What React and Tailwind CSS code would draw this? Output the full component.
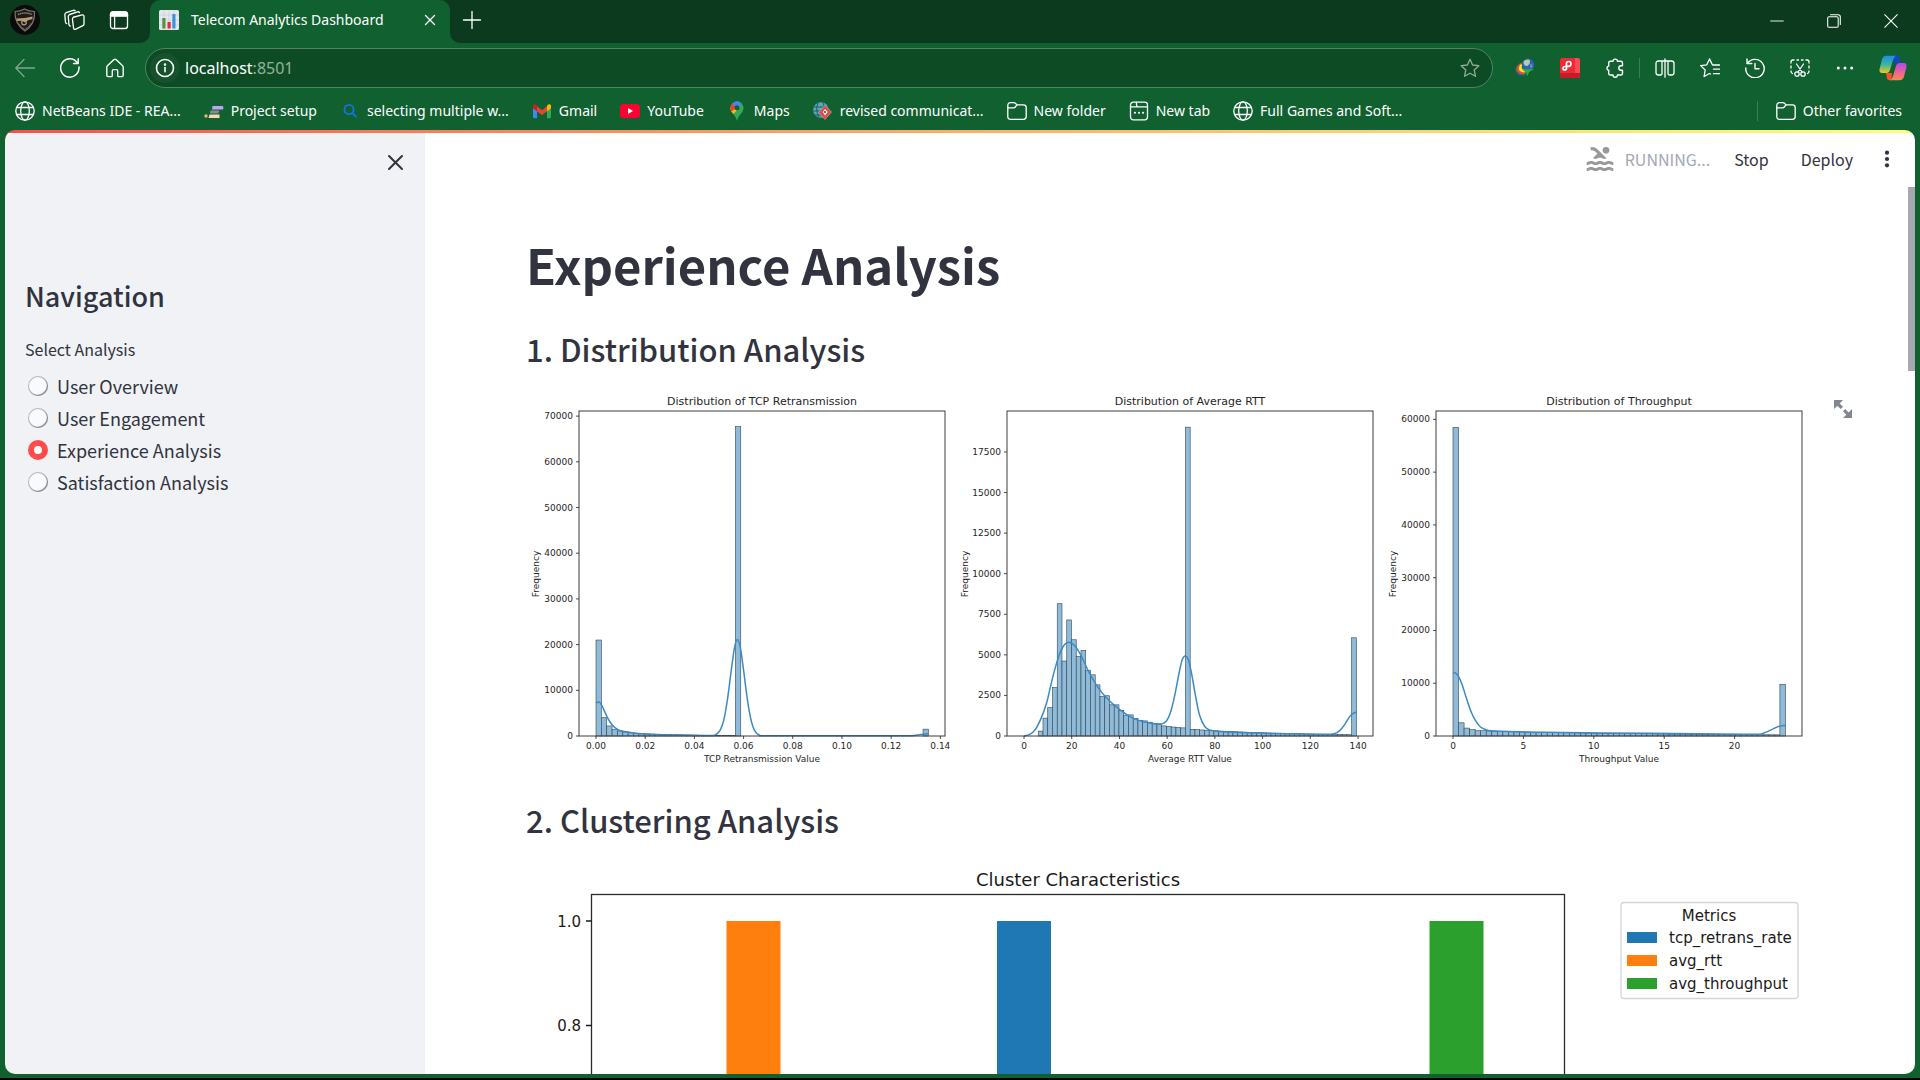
import React, { useState } from "react";
import { MdPool } from "react-icons/md";

const stroke = {
  fill: "none",
  stroke: "currentColor",
  strokeWidth: 1.3,
  strokeLinecap: "round",
  strokeLinejoin: "round",
};

function Icon({ size = "size-5", children, ...rest }) {
  return (
    <svg viewBox="0 0 20 20" className={`${size} shrink-0`} aria-hidden="true" {...stroke} {...rest}>
      {children}
    </svg>
  );
}

/* ---------- icons ---------- */

const Crest = () => (
  <svg viewBox="0 0 30 30" className="size-[30px]" aria-hidden="true">
    <circle cx="15" cy="15" r="15" fill="#0b0b0c" />
    <path d="M5 6.5Q10 6.5 14.500 4Q19 6.500 24.500 6.500Q25.500 19 15 26Q4.500 19 5 6.500Z" fill="#1d1b19" stroke="#7d7467" strokeWidth="1.200" />
    <path d="M8 9.500Q15 6.500 22 9.500" fill="none" stroke="#8b8478" strokeWidth="1.500" strokeDasharray="1.500 .6" />
    <path d="M6.500 13.500L15 13L22.500 11.500L22.500 14L17.500 15.500L15 17.500L12 15.700L7 16Z" fill="#b79c78" />
    <circle cx="14" cy="17.500" r="2.300" fill="none" stroke="#b79c78" strokeWidth="1.200" />
    <path d="M9 19Q11 22.500 15 24.500Q19 22 21.500 18" fill="none" stroke="#6d6357" strokeWidth="1" />
  </svg>
);

const Workspaces = () => (
  <Icon size="size-[22px]" strokeWidth="1.200">
    <path d="M8.800 7.300L16.800 5.200Q18.500 5 18.500 6.600V13.500Q18.500 14.600 17.500 14.900L10.600 18.300Q9.200 18.700 9 17.300L8 9.300Q8 7.700 8.800 7.300Z" transform="translate(.6 .2)" />
    <path d="M6.600 15.600Q5.500 15.300 5.400 14.200L4.800 6.900Q4.800 5.500 6 5L13.300 2.600Q14.600 2.300 15 3.400" />
    <path d="M3.300 13.200Q2.300 12.800 2.200 11.700L1.700 5.200Q1.600 3.900 2.800 3.400L9.300 1.200Q10.400 .9 11 1.600" />
  </Icon>
);

const TabActions = () => (
  <Icon>
    <rect x="1.500" y="1.800" width="17" height="16.700" rx="2.600" />
    <path d="M1.500 4.400Q1.500 1.800 4.100 1.800H15.900Q18.500 1.800 18.500 4.400V6.200H1.500Z" fill="currentColor" />
    <path d="M5.600 6.500V18.200" />
  </Icon>
);

const ChartFavicon = () => (
  <svg viewBox="0 0 20 20" className="size-5 shrink-0" aria-hidden="true">
    <rect width="20" height="20" rx="1.500" fill="#e3e8ee" />
    <path d="M0 5H20M0 10H20M0 15H20M5 0V20M10 0V20M15 0V20" stroke="#c4ced8" strokeWidth=".7" />
    <rect x="3.300" y="8" width="3.200" height="10.500" fill="#5c913b" />
    <rect x="8.500" y="12" width="3.200" height="6.500" fill="#dd2e44" />
    <rect x="13.300" y="4" width="3.200" height="14.500" fill="#3b94d9" />
  </svg>
);

const Close = ({ size = "size-5" }) => (
  <Icon size={size}><path d="M5.500 5.500L14.500 14.500M14.500 5.500L5.500 14.500" /></Icon>
);
const Plus = () => <Icon><path d="M10 1.500V18.500M1.500 10H18.500" /></Icon>;
const Back = () => <Icon><path d="M19.500 10H1M9 1.500L.8 10L9 18.500" /></Icon>;
const Reload = () => (
  <Icon strokeWidth="1.500"><path d="M19 9A9.200 9.200 0 1 1 14.800 2.200L18 5.300M18.200 .8V5.500H13.500" /></Icon>
);
const Home = () => (
  <Icon strokeWidth="1.400"><path d="M1.800 9.200Q1.800 8.300 2.400 7.800L9 1.600Q10 .9 11 1.600L17.600 7.800Q18.200 8.300 18.200 9.200V17.300Q18.200 18.600 17 18.600H13.900Q12.700 18.600 12.700 17.400V13Q12.700 11.600 11.500 11.600H8.500Q7.300 11.600 7.300 13V17.400Q7.300 18.600 6.100 18.600H3Q1.800 18.600 1.800 17.300Z" /></Icon>
);
const Info = () => (
  <Icon strokeWidth="1.600"><circle cx="10" cy="10" r="8.500" /><path d="M10 9.500V13.800" /><circle cx="10" cy="6.600" r=".5" fill="currentColor" /></Icon>
);
const starPath = "M10 1.300L12.600 7L18.800 7.700L14.200 11.900L15.500 18.300L10 15.200L4.500 18.300L5.800 11.900L1.200 7.700L7.400 7Z";
const Star = () => <Icon><path d={starPath} /></Icon>;
const Globe = () => (
  <Icon><circle cx="10" cy="10" r="9.200" /><ellipse cx="10" cy="10" rx="4.300" ry="9.200" /><path d="M1.800 6.500H18.200M1.800 13.500H18.200" /></Icon>
);
const Folder = () => (
  <Icon>
    <path d="M.8 4.600Q.8 1.600 3.600 1.600H6.700Q7.700 1.600 8.400 2.300L10 3.900H16.500Q19.200 3.900 19.200 6.600V15.600Q19.200 18.300 16.500 18.300H3.500Q.8 18.300 .8 15.600Z" />
    <path d="M.8 6.800H6.700Q7.700 6.800 8.300 6L10 3.900" />
  </Icon>
);
const NewTabIcon = () => (
  <Icon>
    <rect x="1.500" y="1.200" width="17" height="17.600" rx="2.800" />
    <path d="M1.500 5.800H18.500M7.500 1.200V3.500Q7.500 5.800 9.500 5.800" />
    <path d="M5.800 11.800H6M9.900 11.800H10.100M14 11.800H14.200" strokeWidth="2" />
  </Icon>
);
const Search = () => (
  <Icon stroke="#1a73d2" strokeWidth="1.800"><circle cx="9" cy="8.500" r="4.600" /><path d="M12.400 12L16 15.700" /></Icon>
);
const Setup = () => (
  <svg viewBox="0 0 20 20" className="size-5 shrink-0" aria-hidden="true">
    <path d="M8.500 5H18.500Q20 5.500 19 8.500H8Z" fill="#b9a7f2" />
    <path d="M6.500 9.500H15.500L14 12.500H6Z" fill="#8a8a95" />
    <path d="M5.500 13.500H15.500V17H4.500Z" fill="#f8d9b0" />
    <circle cx="2" cy="15" r="1.700" fill="#f0b27a" />
  </svg>
);
const Gmail = () => (
  <svg viewBox="0 0 20 20" className="size-5 shrink-0" aria-hidden="true">
    <path d="M1 4.500V16Q1 17.300 2.300 17.300H5V9Z" fill="#4285f4" />
    <path d="M19 4.500V16Q19 17.300 17.700 17.300H15V9Z" fill="#34a853" />
    <path d="M5 5.300L10 9.300L15 5.300V10.200L10 14L5 10.200Z" fill="#ea4335" />
    <path d="M1 5Q1.200 2.300 3.900 3.600L5 4.800V10.200L1 7.200Z" fill="#c5221f" />
    <path d="M19 5Q18.800 2.300 16.100 3.600L15 4.800V10.200L19 7.200Z" fill="#fbbc04" />
  </svg>
);
const YouTube = () => (
  <svg viewBox="0 0 20 20" className="size-5 shrink-0" aria-hidden="true">
    <rect y="3" width="20" height="14" rx="3.500" fill="#ff0033" />
    <path d="M8 7L13 10L8 13Z" fill="#fff" />
  </svg>
);
const Maps = () => (
  <svg viewBox="0 0 20 20" className="size-5 shrink-0" aria-hidden="true">
    <path d="M3.500 7A6.500 6.500 0 0 1 16.500 7C16.500 12.500 11.500 13 10 20C8.500 13 3.500 12.500 3.500 7Z" fill="#34a853" />
    <path d="M3.500 7C3.500 10 5 11.500 6.500 13L13 5.500L7 3Z" fill="#fbbc04" />
    <path d="M3.500 7Q3.500 4.500 5.200 2.600L10 6.500L4.500 10.500Q3.500 9 3.500 7Z" fill="#ea4335" />
    <path d="M5.200 2.600Q10-2.500 14.900 2.700L10 7.500Z" fill="#4285f4" />
    <circle cx="10" cy="6.800" r="2.500" fill="#1c5a35" />
  </svg>
);
const Revised = () => (
  <svg viewBox="0 0 20 20" className="size-5 shrink-0" aria-hidden="true">
    <circle cx="8" cy="9" r="7.800" fill="#5ba7b8" />
    <path d="M1 6H15M.5 10H15M2 14H13M5 2Q2 9 6 16M10 1.500Q13 8 9 16" stroke="#1b5e66" strokeWidth="1" fill="none" />
    <path d="M12 4.500L18.500 11L12 18.500L5.500 11.500Z" fill="#dd4b4b" stroke="#e9a09a" strokeWidth=".6" />
    <path d="M12 8L14.700 11L12 14.500L9.800 11.300Z" fill="#fff" />
    <circle cx="12" cy="11" r="1.100" fill="#c62828" />
  </svg>
);
const DownloadManager = () => (
  <svg viewBox="0 0 20 20" className="size-5" aria-hidden="true">
    <path d="M5 5Q-1 9 1 14Q4 19.500 11 17L10 12Q6 13 5.500 10Q5.300 7.500 8 5.500Z" fill="#2a5f98" />
    <path d="M5 5.500Q0 9.500 2 13.500Q5 17 10 16L8.500 13Q4 13 4.500 9.500Q5 7 7.500 5Z" fill="#e3502c" />
    <path d="M6 6Q2.500 9.500 4.500 12.500Q6.500 14.800 10.500 14.500L9 11.500Q5.500 11 7.500 6.500Z" fill="#f2e63c" />
    <circle cx="13" cy="6.800" r="6.200" fill="#2f63b0" />
    <path d="M8.500 3.500Q11 .5 14.500 1.800Q16 5.500 12.500 8Q8.500 8.500 8.500 3.500Z" fill="#b9c9b0" />
    <path d="M15 6Q18 6 17.500 9Q16 11 15 9Z" fill="#5d8fd0" />
    <path d="M7 11.500L19 11L12 18.500L11.500 15Z" fill="#25b33b" />
    <path d="M12 18.500L19 11L14.500 14Z" fill="#0b3f17" />
  </svg>
);
const RedExtension = () => (
  <svg viewBox="0 0 20 20" className="size-5" aria-hidden="true">
    <rect width="20" height="20" rx="2.500" fill="#ee2a35" />
    <path d="M15 0H17.500Q20 0 20 2.500V17.500Q20 20 17.500 20H15Z" fill="#fb4a57" />
    <path d="M0 15H20V17.500Q20 20 17.500 20H2.500Q0 20 0 17.500Z" fill="#c81a2a" />
    <path d="M5 8.500Q3 8.500 3 10.300Q3 12 4.700 12Q6.500 12 6.500 10V5.500Q6.500 3.500 8.700 3.500Q11 3.500 11 5.800Q11 8.300 8.500 8.300H5" fill="none" stroke="#fff" strokeWidth="1.700" />
  </svg>
);
const Puzzle = () => (
  <Icon strokeWidth="1.400"><path d="M8 3.300A2.200 2.200 0 0 1 12.400 3.300H15.800Q17.500 3.300 17.500 5V7.800H16A2.200 2.200 0 0 0 16 12.200H17.500V15.400Q17.500 17 15.800 17H12.400A2.200 2.200 0 0 1 8 17H5.400Q3.700 17 3.700 15.400V12.300A2.200 2.200 0 0 1 3.700 8V5Q3.700 3.300 5.400 3.300Z" /></Icon>
);
const Split = () => (
  <Icon><path d="M10 3H3.500Q1 3 1 5.500V14.500Q1 17 3.500 17H5.500Q7 17 7 15.500V3M10 3H16.500Q19 3 19 5.500V14.500Q19 17 16.500 17H14.500Q13 17 13 15.500V3M10 .8V19.200" /></Icon>
);
const Favorites = () => (
  <Icon><path d="M19.500 11.200H13.500M19.500 15.700H13.500M19.500 7H12.500L9.500 .9L6.800 6.800L.6 7.600L5.200 12L4.100 18.500L9.500 15.500L10.500 16" /></Icon>
);
const History = () => (
  <Icon strokeWidth="1.400"><path d="M2.300 5.500A9.200 9.200 0 1 1 .8 10M2 .9V5.500H6.800M10 5.500V10.800H14" /></Icon>
);
const Capture = () => (
  <Icon>
    <path d="M1 5V4Q1 2 3 2H4M7 2H8.500M11.500 2H13M16 2H17Q19 2 19 4V5M19 8V10M19 13Q19 15 17.500 15.500M1 8V10M1 13Q1 15 2.500 15.500" />
    <path d="M6.500 6L12 14M13.500 6L8 14" />
    <circle cx="7" cy="16" r="2.200" /><circle cx="13" cy="16" r="2.200" />
  </Icon>
);
const More = () => (
  <Icon fill="currentColor" stroke="none"><circle cx="3.300" cy="10" r="1.500" /><circle cx="10" cy="10" r="1.500" /><circle cx="16.700" cy="10" r="1.500" /></Icon>
);
const Copilot = () => (
  <svg viewBox="0 0 28 26" className="h-[26px] w-7" aria-hidden="true">
    <defs>
      <linearGradient id="cpA" x1="0" y1="0" x2="0" y2="1"><stop offset="0" stopColor="#1b8fe8" /><stop offset=".5" stopColor="#37b5a0" /><stop offset="1" stopColor="#f5c518" /></linearGradient>
      <linearGradient id="cpB" x1="0" y1="0" x2="0" y2="1"><stop offset="0" stopColor="#a64df0" /><stop offset=".5" stopColor="#ee5e9a" /><stop offset="1" stopColor="#fb8b4b" /></linearGradient>
    </defs>
    <path d="M14 .8H17.500Q19.500 .8 20.200 3L21.500 8H15Z" fill="#1246c9" />
    <path d="M7 18H13L12.500 25.200H10.500Q8.500 25.200 8 23.500Z" fill="#f0562e" />
    <path d="M7.500 .8H17Q15 1.500 14 5L11 15Q10 18 7.500 18H3Q0 18 .5 14L3 4.500Q4 .8 7.500 .8Z" fill="url(#cpA)" />
    <path d="M20.500 25.200H11Q13 24.500 14 21L17 11Q18 8 20.500 8H25Q28 8 27.500 12L25 21.500Q24 25.200 20.500 25.200Z" fill="url(#cpB)" />
  </svg>
);

/* ---------- browser chrome ---------- */

const bookmarks = [
  ["NetBeans IDE - REA...", Globe],
  ["Project setup", Setup],
  ["selecting multiple w...", Search],
  ["Gmail", Gmail],
  ["YouTube", YouTube],
  ["Maps", Maps],
  ["revised communicat...", Revised],
  ["New folder", Folder],
  ["New tab", NewTabIcon],
  ["Full Games and Soft...", Globe],
];

function ToolButton({ label, children, className = "w-[45px]" }) {
  return (
    <button type="button" aria-label={label} className={`flex h-10 shrink-0 items-center justify-center ${className}`}>
      {children}
    </button>
  );
}

function TitleBar() {
  return (
    <div className="flex h-[43px] bg-[#0c3a1e]">
      <div className="flex w-[150px] shrink-0 items-center bg-[#0c3a1e] pb-1 pl-0.5">
        <ToolButton label="Profile"><Crest /></ToolButton>
        <ToolButton label="Workspaces" className="w-[50px] pl-1"><Workspaces /></ToolButton>
        <ToolButton label="Tab actions" className="w-[45px] pr-px"><TabActions /></ToolButton>
      </div>
      <div className="-ml-2.5 flex w-[320px] shrink-0 bg-[#106030]">
        <div className="w-2.5 rounded-br-[10px] bg-[#0c3a1e]" />
        <div className="flex flex-1 bg-[#0c3a1e]">
          <div className="flex flex-1 items-center rounded-t-[10px] bg-[#106030] pb-1 pl-[9px] pr-2">
            <ChartFavicon />
            <span className="ml-3 flex-1 whitespace-nowrap text-[14px]">Telecom Analytics Dashboard</span>
            <button type="button" aria-label="Close tab" className="flex size-6 items-center justify-center"><Close /></button>
          </div>
        </div>
        <div className="w-2.5 rounded-bl-[10px] bg-[#0c3a1e]" />
      </div>
      <button type="button" aria-label="New tab" className="flex w-6 items-center justify-center pb-1"><Plus /></button>
      <div className="ml-auto flex pb-0.5 pr-px">
        <button type="button" aria-label="Minimize" className="flex w-[57px] items-center justify-center">
          <Icon size="size-3.5"><path d="M1 10H19" /></Icon>
        </button>
        <button type="button" aria-label="Restore" className="flex w-[57px] items-center justify-center">
          <Icon size="size-3.5" strokeWidth="1.500"><rect x="1" y="4" width="15" height="15" rx="2" /><path d="M5 1H16Q19 1 19 4V15" /></Icon>
        </button>
        <button type="button" aria-label="Close window" className="flex w-[57px] items-center justify-center">
          <Icon size="size-3.5" strokeWidth="1.500"><path d="M1 1L19 19M19 1L1 19" /></Icon>
        </button>
      </div>
    </div>
  );
}

function Toolbar() {
  return (
    <div className="flex h-[50px] items-center pl-0.5 pr-px">
      <ToolButton label="Back" className="w-[45px] opacity-45"><Back /></ToolButton>
      <ToolButton label="Reload"><Reload /></ToolButton>
      <ToolButton label="Home"><Home /></ToolButton>
      <div className="ml-2 mr-[9px] flex h-10 flex-1 items-center rounded-full border border-[#4f8563] bg-[#0d4b25] pl-1 pr-3">
        <button type="button" aria-label="Site information" className="flex size-[30px] items-center justify-center rounded-full bg-[#15522d]"><Info /></button>
        <div className="relative ml-[5px] h-8 flex-1">
          <div aria-hidden="true" className="absolute inset-0 flex items-center text-[16px]">
            <span>localhost</span><span className="text-[#93b29d]">:8501</span>
          </div>
          <input aria-label="Address" defaultValue="" className="relative h-8 w-full bg-transparent outline-none" />
        </div>
        <button type="button" aria-label="Add to favorites" className="text-[#8fae9a]"><Star /></button>
      </div>
      <ToolButton label="Download manager"><DownloadManager /></ToolButton>
      <ToolButton label="PDF extension"><RedExtension /></ToolButton>
      <ToolButton label="Extensions"><Puzzle /></ToolButton>
      <div className="mx-0.5 h-5 w-px bg-[#3c7f55]" />
      <ToolButton label="Split screen"><Split /></ToolButton>
      <ToolButton label="Favorites"><Favorites /></ToolButton>
      <ToolButton label="History"><History /></ToolButton>
      <ToolButton label="Screenshot"><Capture /></ToolButton>
      <ToolButton label="Settings and more"><More /></ToolButton>
      <ToolButton label="Copilot" className="w-[52px]"><Copilot /></ToolButton>
    </div>
  );
}

function Bookmarks() {
  return (
    <nav aria-label="Favorites bar" className="flex h-9 items-center pb-px pl-[15px] pr-[18px] text-[14px]">
      <div className="flex items-center gap-[23px]">
        {bookmarks.map(([name, Glyph]) => (
          <a key={name} href="#" className="flex items-center gap-[7px] whitespace-nowrap"><Glyph />{name}</a>
        ))}
      </div>
      <div className="ml-auto h-5 w-px bg-[#3c7f55]" />
      <a href="#" className="ml-[18px] flex items-center gap-[7px] whitespace-nowrap"><Folder />Other favorites</a>
    </nav>
  );
}

/* ---------- charts ---------- */

const BASE = 346;
const TOP = 21;

/* Catmull-Rom spline through the points, written as cubic segments */
function smooth(points) {
  let d = `M${points[0][0]} ${points[0][1]}`;
  for (let i = 0; i < points.length - 1; i++) {
    const p0 = points[i - 1] || points[i];
    const p1 = points[i];
    const p2 = points[i + 1];
    const p3 = points[i + 2] || p2;
    d += `C${p1[0] + (p2[0] - p0[0]) / 6} ${p1[1] + (p2[1] - p0[1]) / 6} ${p2[0] - (p3[0] - p1[0]) / 6} ${p2[1] - (p3[1] - p1[1]) / 6} ${p2[0]} ${p2[1]}`;
  }
  return d;
}

const decay = (n, from, to) =>
  Array.from({ length: n }, (_, i) => from * Math.pow(to / from, i / (n - 1)));

/* bars are frequencies; density is [x in data units, frequency] */
const histograms = [
  {
    title: "Distribution of TCP Retransmission",
    label: "TCP Retransmission Value",
    left: 53, labelX: 13, zero: 70, unit: 2459.5, perCount: 0.00457,
    yTicks: [0, 10000, 20000, 30000, 40000, 50000, 60000, 70000],
    xTicks: ["0.00", "0.02", "0.04", "0.06", "0.08", "0.10", "0.12", "0.14"],
    bin: 0.00218,
    bars: [21000, 4000, 2200, 1400, 1100, 900, 700, ...decay(19, 560, 90), 67700, ...Array(34).fill(0), 1500],
    density: [[0, 7200], [0.0009, 7450], [0.0018, 7200], [0.003, 6000], [0.0045, 4200], [0.006, 2850], [0.0077, 1850], [0.01, 1150], [0.014, 780], [0.02, 450], [0.028, 280], [0.038, 160], [0.046, 120], [0.0485, 250], [0.0505, 1300], [0.052, 3600], [0.0535, 8200], [0.055, 14400], [0.0563, 19300], [0.0575, 21100], [0.0587, 19300], [0.06, 14400], [0.0615, 8200], [0.063, 3600], [0.0645, 1200], [0.0665, 180], [0.07, 60], [0.1, 50], [0.125, 50], [0.13, 150], [0.133, 400], [0.1352, 500]],
  },
  {
    title: "Distribution of Average RTT",
    label: "Average RTT Value",
    left: 481, labelX: 442, zero: 498, unit: 2.386, perCount: 0.01623,
    yTicks: [0, 2500, 5000, 7500, 10000, 12500, 15000, 17500],
    xTicks: ["0", "20", "40", "60", "80", "100", "120", "140"],
    bin: 1.99,
    bars: [0, 0, 0, 300, 1100, 1750, 2980, 8150, 4620, 7150, 5930, 4900, 5270, 4050, 3770, 3150, 2430, 2480, 1920, 1920, 1580, 1280, 1300, 1080, 950, 930, 850, 780, 750, 620, 590, 550, 520, 500, 19030, ...decay(34, 410, 80), 6050],
    density: [[0, 0], [2.4, 100], [4.8, 410], [7.2, 1100], [9.4, 2000], [11.2, 3100], [13, 4150], [15, 5100], [17, 5640], [19, 5780], [21.3, 5560], [24, 4930], [27.5, 3850], [31, 3000], [35, 2280], [40, 1640], [45, 1150], [50, 880], [55.5, 740], [57.6, 730], [59.7, 920], [61.3, 1420], [63, 2380], [65, 3880], [66.300, 4700], [67.600, 4930], [68.900, 4700], [70.2, 3880], [72, 2380], [73.6, 1280], [75.7, 600], [77.8, 370], [80.6, 300], [87.5, 230], [101, 165], [115, 125], [126, 105], [130, 140], [132.3, 330], [134.4, 700], [136.4, 1180], [138, 1400], [139.3, 1470]],
  },
  {
    title: "Distribution of Throughput",
    label: "Throughput Value",
    left: 910, labelX: 870, zero: 927, unit: 14.08, perCount: 0.005277,
    yTicks: [0, 10000, 20000, 30000, 40000, 50000, 60000],
    xTicks: ["0", "5", "10", "15", "20"],
    bin: 0.3935,
    bars: [58500, 2500, 1500, 1200, 1000, 1000, 950, ...decay(52, 880, 220), 9800],
    density: [[0, 12000], [0.2, 11900], [0.4, 11250], [0.65, 9700], [0.97, 7000], [1.3, 4500], [1.6, 2900], [1.95, 1700], [2.35, 1200], [2.95, 950], [6.5, 700], [14, 500], [19, 360], [21.5, 340], [22, 480], [22.6, 1150], [23, 1680], [23.35, 1960], [23.6, 1990]],
  },
];

const AXIS_WIDTH = 366;

function Histogram({ data }) {
  const { left, zero, unit, perCount, bin } = data;
  const center = left + AXIS_WIDTH / 2;
  const step = unit === 14.08 ? 5 : Number(data.xTicks[1]);
  const x = (v) => zero + v * unit;
  const y = (v) => BASE - v * perCount;
  return (
    <g>
      <text x={center} y={15} textAnchor="middle" className="text-[11px]">{data.title}</text>
      <g fill="#8fbbd9" stroke="#2f4656" strokeWidth=".6">
        {data.bars.map((v, i) =>
          v ? <rect key={i} x={x(i * bin)} y={y(v)} width={bin * unit} height={v * perCount} /> : null
        )}
      </g>
      <path d={smooth(data.density.map(([a, b]) => [x(a), y(b)]))} fill="none" stroke="#3a8ac6" strokeWidth="1.500" />
      <rect x={left} y={TOP} width={AXIS_WIDTH} height={BASE - TOP} fill="none" stroke="#3c3c3c" strokeWidth="1" />
      {data.yTicks.map((t) => (
        <g key={t}>
          <path d={`M${left - 3} ${y(t)}H${left}`} stroke="#222" strokeWidth=".8" />
          <text x={left - 6} y={y(t) + 3} textAnchor="end" className="text-[9px]">{t}</text>
        </g>
      ))}
      {data.xTicks.map((t, i) => (
        <g key={t}>
          <path d={`M${x(i * step)} ${BASE}V${BASE + 3}`} stroke="#222" strokeWidth=".8" />
          <text x={x(i * step)} y={BASE + 13} textAnchor="middle" className="text-[9px]">{t}</text>
        </g>
      ))}
      <text x={center} y={BASE + 26} textAnchor="middle" className="text-[9px]">{data.label}</text>
      <text transform={`translate(${data.labelX} 184) rotate(-90)`} textAnchor="middle" className="text-[9px]">Frequency</text>
    </g>
  );
}

const metrics = [
  ["tcp_retrans_rate", "#1f77b4"],
  ["avg_rtt", "#ff7f0e"],
  ["avg_throughput", "#2ca02c"],
];

function ClusterChart() {
  return (
    <svg viewBox="0 0 1288 600" className="block h-auto w-full font-['DejaVu_Sans',sans-serif]" fill="#1a1a1a" role="img" aria-label="Cluster Characteristics">
      <text x="552" y="21" textAnchor="middle" className="text-[18px]">Cluster Characteristics</text>
      <rect x="200.500" y="56" width="54" height="523" fill="#ff7f0e" />
      <rect x="471" y="56" width="54" height="523" fill="#1f77b4" />
      <rect x="903.500" y="56" width="54" height="523" fill="#2ca02c" />
      <rect x="65.500" y="29.500" width="973" height="549" fill="none" stroke="#2b2b2b" strokeWidth="1.300" />
      <path d="M60 56H65.500M60 160.500H65.500" stroke="#1a1a1a" strokeWidth="1.300" />
      <text x="55" y="62" textAnchor="end" className="text-[15px]">1.0</text>
      <text x="55" y="166" textAnchor="end" className="text-[15px]">0.8</text>
      <rect x="1095" y="37.500" width="177" height="96" rx="3" fill="#fff" stroke="#d6d6d6" strokeWidth="1.300" />
      <text x="1183" y="56" textAnchor="middle" className="text-[15px]">Metrics</text>
      {metrics.map(([name, color], i) => (
        <g key={name}>
          <rect x="1101" y={67 + i * 23} width="30" height="11" fill={color} />
          <text x="1143" y={78 + i * 23} className="text-[15px]">{name}</text>
        </g>
      ))}
    </svg>
  );
}

/* ---------- dashboard ---------- */

const analyses = ["User Overview", "User Engagement", "Experience Analysis", "Satisfaction Analysis"];

function Sidebar() {
  const [selected, setSelected] = useState("Experience Analysis");
  return (
    <aside className="w-[420px] shrink-0 bg-[#f0f2f6] px-5">
      <div className="flex h-[58px] items-center justify-end">
        <button type="button" aria-label="Close sidebar" className="flex size-5 items-center justify-center">
          <Icon strokeWidth="2"><path d="M4 4L17 17M17 4L4 17" /></Icon>
        </button>
      </div>
      <h2 className="mt-[87px] text-[27px] font-medium leading-9">Navigation</h2>
      <fieldset className="mt-[23px]">
        <legend className="text-[16px] leading-6">Select Analysis</legend>
        <div className="mt-[9px]">
          {analyses.map((name) => (
            <label key={name} className="flex h-8 items-center gap-[9px] pl-[3px] text-[18px]">
              <input
                type="radio"
                name="analysis"
                checked={selected === name}
                onChange={() => setSelected(name)}
                className="size-5 appearance-none rounded-full bg-[#fafafc] shadow-[inset_-1px_-1px_1px_0_#8a8c96,inset_0_0_0_1px_#b4b6be] checked:border-[6px] checked:border-[#ff4b4b] checked:bg-white checked:shadow-none"
              />
              {name}
            </label>
          ))}
        </div>
      </fieldset>
    </aside>
  );
}

function Main() {
  return (
    <main className="flex min-w-0 flex-1 flex-col bg-white">
      <header className="flex h-[54px] shrink-0 items-center justify-end pb-0.5 pr-[18px] text-[16px]">
        <MdPool className="size-8 text-[#999]" aria-hidden="true" />
        <span className="ml-[9px] text-[#a3a8b4]">RUNNING...</span>
        <button type="button" className="ml-6">Stop</button>
        <button type="button" className="ml-8">Deploy</button>
        <button type="button" aria-label="Menu" className="ml-6 flex size-5 items-center justify-center">
          <svg viewBox="0 0 20 20" className="size-5" fill="currentColor" aria-hidden="true"><circle cx="10" cy="3.700" r="2.100" /><circle cx="10" cy="10" r="2.100" /><circle cx="10" cy="16.300" r="2.100" /></svg>
        </button>
      </header>
      <div className="flex min-h-0 flex-1">
        <div className="min-w-0 flex-1 overflow-hidden pl-[101px] pr-[94px]">
          <h1 className="mt-11 text-[49px] font-bold leading-[66px]">Experience Analysis</h1>
          <h2 className="mt-[31px] text-[31px] font-medium leading-[42px]">1. Distribution Analysis</h2>
          <div className="relative mt-5">
            <svg viewBox="0 0 1288 380" className="block h-auto w-full font-['DejaVu_Sans',sans-serif]" fill="#262626" role="img" aria-label="Distribution histograms">
              {histograms.map((h) => <Histogram key={h.title} data={h} />)}
            </svg>
            <button type="button" aria-label="View fullscreen" className="absolute -right-[38px] top-2.5 text-[#82868f]">
              <svg viewBox="0 0 8 8" className="size-[18px]" fill="currentColor" aria-hidden="true"><path d="M0 0v4l1.500-1.500 1.500 1.500 1-1-1.500-1.500 1.500-1.500h-4zm5 4l-1 1 1.500 1.500-1.500 1.500h4v-4l-1.500 1.500-1.500-1.500z" /></svg>
            </button>
          </div>
          <h2 className="mt-[29px] text-[31px] font-medium leading-[42px]">2. Clustering Analysis</h2>
          <div className="mt-6"><ClusterChart /></div>
        </div>
        <div className="w-[7px] shrink-0" aria-hidden="true"><div className="h-[184px] w-full bg-[#a7a8b0]" /></div>
      </div>
    </main>
  );
}

export default function App() {
  return (
    <div className="flex h-screen flex-col border-b-2 border-black bg-[#106030] font-['Noto_Sans',sans-serif] text-white">
      <TitleBar />
      <Toolbar />
      <Bookmarks />
      <div className="mx-[5px] mb-1 mt-px flex min-h-0 flex-1 flex-col overflow-hidden rounded-[10px] font-['Noto_Sans_CJK_SC',sans-serif] text-[#31333f]">
        <div className="h-[3px] shrink-0 bg-linear-to-r from-[#ff4b4b] to-[#fffd80]" />
        <div className="flex min-h-0 flex-1">
          <Sidebar />
          <Main />
        </div>
      </div>
    </div>
  );
}
